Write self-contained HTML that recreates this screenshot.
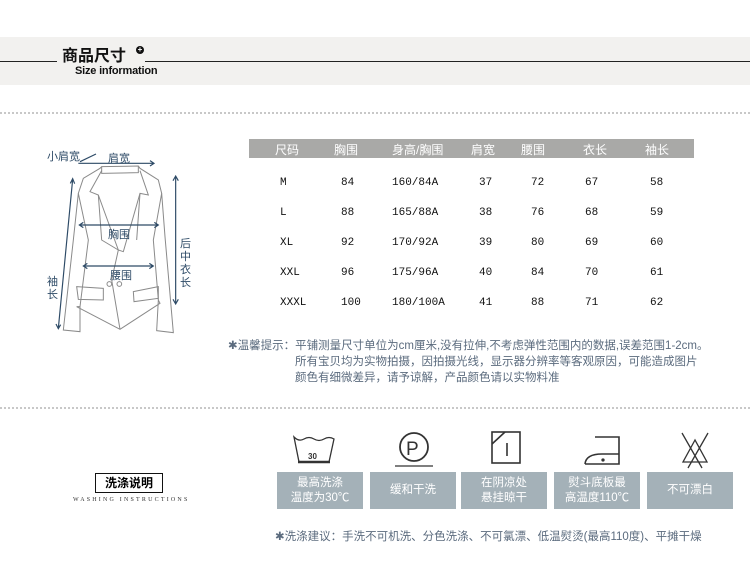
<!DOCTYPE html>
<html><head><meta charset="utf-8"><style>
body{margin:0;width:750px;height:585px;background:#fff;position:relative;overflow:hidden;font-family:"Liberation Sans","Noto Sans CJK SC",sans-serif}
.a{position:absolute}
.dot{position:absolute;left:0;width:750px;height:0;border-top:2px dotted #c8c8c8}
.hd{position:absolute;top:139px;left:249px;width:445px;height:19px;background:#a9a9a7}
.hd span,.r span{position:absolute;font-size:12px}
.hd span{color:#fff;top:2px}
.r span{font-family:"Liberation Mono","Noto Sans CJK SC",monospace;font-size:11px;color:#111}
.box{position:absolute;top:472px;height:37px;width:86px;background:#a4b1b8;color:#fff;font-size:11.5px;line-height:15px;display:flex;align-items:center;justify-content:center;text-align:center}
.note{color:#5b6b7e;font-size:11.5px}
.lb{position:absolute;color:#2d4a66;font-size:11px}
</style></head><body>
<div class="a" style="left:0;top:37px;width:750px;height:48px;background:#f2f1ef"></div>
<div class="a" style="left:0;top:61px;width:57px;border-top:1px solid #222"></div>
<div class="a" style="left:145px;top:61px;width:605px;border-top:1px solid #222"></div>
<div class="a" style="left:62px;top:42px;font-size:16px;font-weight:bold;color:#111">商品尺寸</div>
<div class="a" style="left:136px;top:46px;width:8px;height:8px;border-radius:50%;background:#111;color:#fff;font-size:8px;line-height:8px;text-align:center;font-weight:bold">+</div>
<div class="a" style="left:75px;top:65px;font-size:11px;font-weight:bold;color:#111;letter-spacing:-0.2px">Size information</div>
<div class="dot" style="top:112px"></div>
<div class="dot" style="top:407px"></div>

<svg class="a" style="left:30px;top:140px" width="180" height="200" viewBox="0 0 540 600" fill="none" stroke="#8a8a8a" stroke-width="3">
<path d="M215 80 L325 78 L330 85 L385 120 L395 160 L405 290 L430 578 L380 572 L385 480 L390 490 L270 568 L140 500 L150 500 L150 575 L100 570 L130 300 L145 160 L160 115 L210 85 Z"/>
<path d="M215 80 L215 100 L325 98 L325 80"/>
<path d="M215 92 L180 155 L205 165 L265 330 L280 335 L330 160 L355 165 L330 92"/>
<path d="M205 165 L215 300 L265 330 M330 160 L320 300"/>
<path d="M265 330 L245 420 L270 568"/>
<path d="M145 160 L175 300 L150 500 M395 160 L370 300 L385 480"/>
<path d="M140 440 L220 445 L220 480 L145 478 Z M310 455 L385 440 L385 475 L312 485 Z"/>
<circle cx="238" cy="432" r="7"/><circle cx="268" cy="432" r="7"/>
<g stroke="#2d4a66" stroke-width="3.5">
<path d="M145 70 L370 70 M360 62 L372 70 L360 78"/>
<path d="M150 65 L198 42"/>
<path d="M148 255 L385 255 M160 247 L148 255 L160 263 M373 247 L385 255 L373 263"/>
<path d="M160 378 L370 378 M172 370 L160 378 L172 386 M358 370 L370 378 L358 386"/>
<path d="M437 110 L437 490 M429 122 L437 108 L445 122 M429 478 L437 492 L445 478"/>
<path d="M128 118 L85 565 M121 130 L128 116 L134 131 M78 552 L85 566 L92 554"/>
</g>
</svg>
<div class="lb" style="left:47px;top:148px">小肩宽</div>
<div class="lb" style="left:108px;top:150px">肩宽</div>
<div class="lb" style="left:108px;top:226px">胸围</div>
<div class="lb" style="left:110px;top:267px">腰围</div>
<div class="lb" style="left:180px;top:238px;width:12px;line-height:13px">后中衣长</div>
<div class="lb" style="left:47px;top:276px;width:12px;line-height:13px">袖长</div>

<div class="hd"><span style="left:26px">尺码</span><span style="left:85px">胸围</span><span style="left:143px">身高/胸围</span><span style="left:222px">肩宽</span><span style="left:272px">腰围</span><span style="left:334px">衣长</span><span style="left:396px">袖长</span></div>
<div class="r a" style="left:249px;top:177px"><span style="left:31px">M</span><span style="left:92px">84</span><span style="left:143px">160/84A</span><span style="left:230px">37</span><span style="left:282px">72</span><span style="left:336px">67</span><span style="left:401px">58</span></div>
<div class="r a" style="left:249px;top:207px"><span style="left:31px">L</span><span style="left:92px">88</span><span style="left:143px">165/88A</span><span style="left:230px">38</span><span style="left:282px">76</span><span style="left:336px">68</span><span style="left:401px">59</span></div>
<div class="r a" style="left:249px;top:237px"><span style="left:31px">XL</span><span style="left:92px">92</span><span style="left:143px">170/92A</span><span style="left:230px">39</span><span style="left:282px">80</span><span style="left:336px">69</span><span style="left:401px">60</span></div>
<div class="r a" style="left:249px;top:267px"><span style="left:31px">XXL</span><span style="left:92px">96</span><span style="left:143px">175/96A</span><span style="left:230px">40</span><span style="left:282px">84</span><span style="left:336px">70</span><span style="left:401px">61</span></div>
<div class="r a" style="left:249px;top:297px"><span style="left:31px">XXXL</span><span style="left:92px">100</span><span style="left:143px">180/100A</span><span style="left:230px">41</span><span style="left:282px">88</span><span style="left:336px">71</span><span style="left:401px">62</span></div>

<div class="a note" style="left:228px;top:338px;line-height:16px">✱温馨提示：平铺测量尺寸单位为cm厘米,没有拉伸,不考虑弹性范围内的数据,误差范围1-2cm。</div>
<div class="a note" style="left:295px;top:354px;line-height:16px">所有宝贝均为实物拍摄，因拍摄光线，显示器分辨率等客观原因，可能造成图片<br>颜色有细微差异，请予谅解，产品颜色请以实物料准</div>

<div class="a" style="left:95px;top:473px;width:66px;height:18px;border:1.5px solid #111;font-size:12px;font-weight:bold;text-align:center;line-height:18px">洗涤说明</div>
<div class="a" style="left:73px;top:497px;font-size:6px;letter-spacing:2.2px;font-family:'Liberation Serif',serif;color:#333">WASHING INSTRUCTIONS</div>

<svg class="a" style="left:277px;top:428px" width="460" height="42" fill="none" stroke="#333" stroke-width="1.3">
<path d="M17 9 Q22 14 27 11 Q32 8 37 11 Q42 14 47 11 Q52 8 57 11 L52 34 L22 34 Z"/><path d="M21 34 L53 34" stroke-width="2.5"/>
<text x="31" y="31" font-size="8" fill="#333" stroke="none" font-family="Liberation Sans" font-weight="bold">30</text>
<circle cx="137" cy="19" r="14" stroke-width="1.8"/><text x="129" y="27" font-size="19" fill="#333" stroke="none" font-family="Liberation Sans">P</text><path d="M118 38 L156 38"/>
<rect x="215" y="4" width="28" height="31" stroke-width="1.6"/><path d="M215 16 L228 4 M230 15 L230 28" stroke-width="1.6"/>
<path d="M308 36 L342 36 L342 9 L318 9 M308 36 Q309 26 325 26 L342 26" stroke-width="1.6"/><circle cx="326" cy="32" r="1" fill="#333"/>
<path d="M405 5 L425 40 M431 5 L411 40 M418 12 L406 34 L430 34 Z"/>
</svg>

<div class="box" style="left:277px">最高洗涤<br>温度为30℃</div>
<div class="box" style="left:370px">缓和干洗</div>
<div class="box" style="left:461px">在阴凉处<br>悬挂晾干</div>
<div class="box" style="left:554px">熨斗底板最<br>高温度110℃</div>
<div class="box" style="left:647px">不可漂白</div>
<div class="a note" style="left:275px;top:528px">✱洗涤建议：手洗不可机洗、分色洗涤、不可氯漂、低温熨烫(最高110度)、平摊干燥</div>
</body></html>
